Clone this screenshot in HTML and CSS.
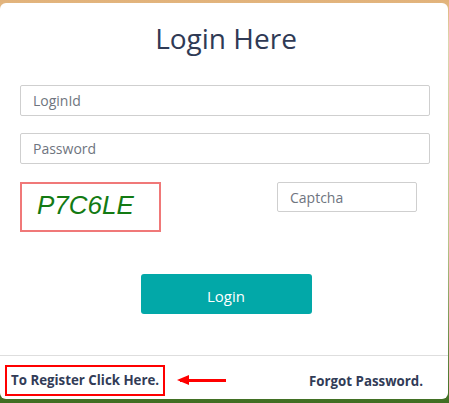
FILE: index.html
```html
<!DOCTYPE html>
<html lang="en">
<head>
    <meta charset="UTF-8">
    <meta name="viewport" content="width=device-width, initial-scale=1.0">
    <title>Login</title>
    <link rel="stylesheet" href="styles.css">
</head>
<body>
    <div class="login-card">
        <div class="login-body">
            <h1>Login Here</h1>
            <input type="text" class="field" placeholder="LoginId">
            <input type="password" class="field" placeholder="Password">
            <div class="captcha-row">
                <div class="captcha-box">P7C6LE</div>
                <input type="text" class="field captcha-input" placeholder="Captcha">
            </div>
            <div class="actions">
                <button class="login-btn">Login</button>
            </div>
        </div>
        <div class="login-footer">
            <a href="#" class="register-link">To Register Click Here.</a>
            <span class="arrow"></span>
            <a href="#" class="forgot-link">Forgot Password.</a>
        </div>
    </div>
</body>
</html>
```

FILE: styles.css
```css
body {
    margin: 0;
    padding: 3px 1px 4px 0;
    font-family: "Open Sans", Arial, sans-serif;
    background: linear-gradient(180deg, #e2b27a 0%, #dcd6ae 10%, #b9c48a 60%, #3f6e22 100%);
}

.login-card {
    background: #fff;
    border-radius: 6px;
    height: 396px;
    display: flex;
    flex-direction: column;
    box-sizing: border-box;
}

.login-body {
    padding: 20px 18px 0 20px;
    flex: 1;
}

h1 {
    margin: 0 0 31px;
    font-size: 28px;
    line-height: 31px;
    font-weight: 400;
    text-align: center;
    color: #2f3a55;
    padding-left: 2px;
}

.field {
    display: block;
    box-sizing: border-box;
    width: 100%;
    height: 31px;
    margin: 0 0 17px;
    padding: 0 12px;
    border: 1px solid #cfcfcf;
    border-radius: 2px;
    font-family: "Open Sans", Arial, sans-serif;
    font-size: 14px;
    color: #555;
}

.field::placeholder {
    color: #6f7580;
}

.captcha-row {
    display: flex;
    align-items: flex-start;
    margin-top: 18px;
}

.captcha-box {
    box-sizing: border-box;
    width: 141px;
    height: 50px;
    border: 2px solid #f07878;
    padding: 6px 0 0 15px;
    font-family: "Liberation Sans", Arial, sans-serif;
    font-style: italic;
    font-size: 26px;
    color: #137a13;
}

.captcha-input {
    width: 140px;
    height: 30px;
    margin: 0 0 0 116px;
}

.actions {
    display: flex;
    justify-content: center;
    margin-top: 42px;
    padding-left: 2px;
}

.login-btn {
    width: 171px;
    height: 40px;
    background-color: #02a8a8;
    color: #fff;
    border: none;
    border-radius: 3px;
    font-family: "Open Sans", Arial, sans-serif;
    font-size: 15px;
    padding-top: 4px;
    cursor: pointer;
}

.login-footer {
    border-top: 1px solid #dedede;
    height: 44px;
    box-sizing: border-box;
    display: flex;
    align-items: center;
    padding: 6px 25px 0 5px;
}

.login-footer a {
    font-size: 13.3px;
    font-weight: 700;
    color: #323c57;
    text-decoration: none;
}

.register-link {
    border: 2px solid #f00;
    padding: 5px 4px 5px 4px;
    line-height: 17px;
}

.arrow {
    position: relative;
    width: 46px;
    height: 3px;
    background: #f00;
    margin-left: 15px;
}

.arrow::before {
    content: "";
    position: absolute;
    left: -3px;
    top: -4px;
    border-style: solid;
    border-width: 5.5px 12px 5.5px 0;
    border-color: transparent #f00 transparent transparent;
}

.forgot-link {
    margin-left: auto;
}
```
